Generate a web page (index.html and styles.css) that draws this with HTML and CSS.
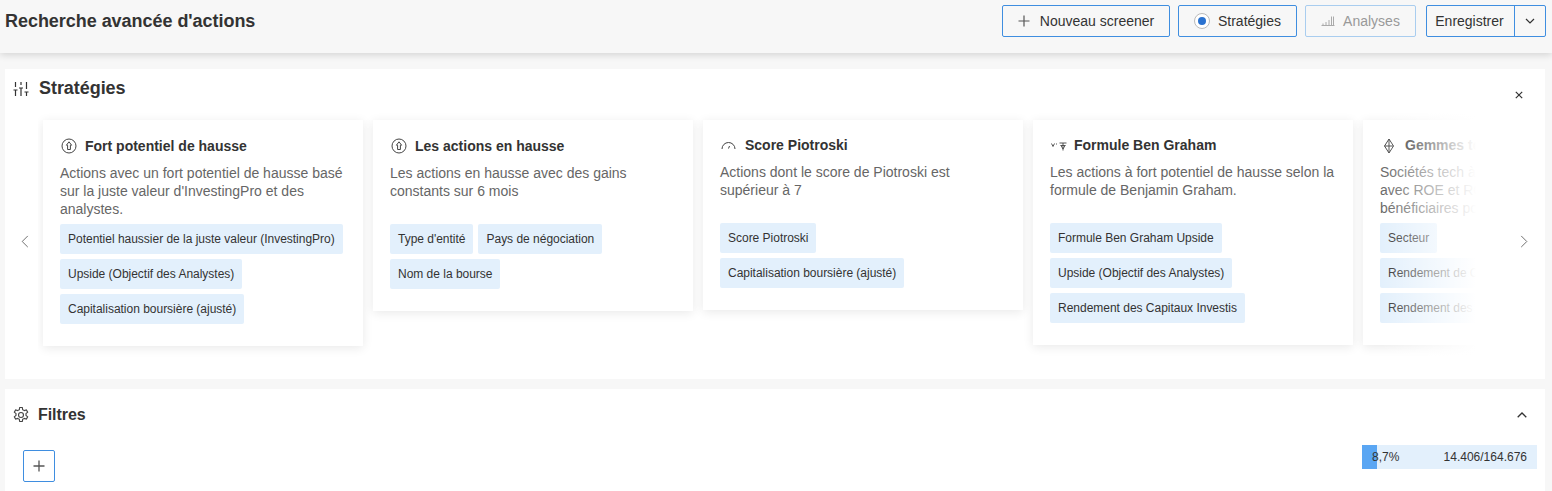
FILE: index.html
```html
<!DOCTYPE html>
<html lang="fr">
<head>
<meta charset="utf-8">
<title>Recherche avancée d'actions</title>
<link rel="stylesheet" href="styles.css">
</head>
<body>
<header class="topbar">
  <h1 class="page-title">Recherche avancée d'actions</h1>
  <div class="actions">
    <button class="btn btn-new"><svg class="ic-plus" viewBox="0 0 12 12"><path d="M6 .5v11M.5 6h11"/></svg>Nouveau screener</button>
    <button class="btn btn-strat"><span class="radio"><span class="radio-dot"></span></span>Stratégies</button>
    <button class="btn btn-analyses"><svg class="ic-bars" viewBox="0 0 14 10"><path d="M.5 9.500h13M2 9V7.500M5 9V6M8 9V4M10.500 9V.5M12.500 9V.5"/></svg>Analyses</button>
    <div class="split">
      <button class="split-main">Enregistrer</button>
      <button class="split-arrow"><svg class="ic-chev" viewBox="0 0 10 6"><path d="M1 1l4 4 4-4"/></svg></button>
    </div>
  </div>
</header>

<main class="content">
  <section class="panel panel-strat">
    <div class="panel-head">
      <svg class="ic-sliders" viewBox="0 0 16 14"><path d="M2.500 0v5M2.500 8v6M.5 8h4M8 0v3M8 6v8M6 6h4M13.500 0v7M13.500 10v4M11.500 10h4"/></svg>
      <h2 class="panel-title">Stratégies</h2>
      <svg class="ic-close" viewBox="0 0 8 8"><path d="M.8.8l6.400 6.400M7.200.8L.8 7.200"/></svg>
    </div>
    <div class="carousel">
      <button class="nav nav-prev"><svg class="ic-nav" viewBox="0 0 8 14"><path d="M7 1L1 7l6 6"/></svg></button>
      <div class="viewport">
        <article class="card">
          <div class="card-head tall"><svg class="ic-card" viewBox="0 0 16 16"><circle cx="8" cy="8" r="7"/><path d="M8 3.800l2.600 3.400H9.400v4.300H6.600V7.200H5.400z"/></svg><h3>Fort potentiel de hausse</h3></div>
          <p class="desc">Actions avec un fort potentiel de hausse basé sur la juste valeur d'InvestingPro et des analystes.</p>
          <div class="tags"><span class="tag">Potentiel haussier de la juste valeur (InvestingPro)</span><span class="tag">Upside (Objectif des Analystes)</span><span class="tag">Capitalisation boursière (ajusté)</span></div>
        </article>
        <article class="card">
          <div class="card-head tall"><svg class="ic-card" viewBox="0 0 16 16"><circle cx="8" cy="8" r="7"/><path d="M8 3.800l2.600 3.400H9.400v4.300H6.600V7.200H5.400z"/></svg><h3>Les actions en hausse</h3></div>
          <p class="desc">Les actions en hausse avec des gains constants sur 6 mois</p>
          <div class="tags"><span class="tag">Type d'entité</span><span class="tag">Pays de négociation</span><span class="tag">Nom de la bourse</span></div>
        </article>
        <article class="card">
          <div class="card-head"><svg class="ic-card" viewBox="0 0 16 16"><path d="M1 11A6.500 6.500 0 0 1 14 11M7.500 10.500l1-2.500"/></svg><h3>Score Piotroski</h3></div>
          <p class="desc">Actions dont le score de Piotroski est supérieur à 7</p>
          <div class="tags tags-stack"><span class="tag">Score Piotroski</span><span class="tag">Capitalisation boursière (ajusté)</span></div>
        </article>
        <article class="card">
          <div class="card-head"><svg class="ic-card ic-graham" viewBox="0 0 16 16"><path d="M.5 5.500l1.500 3 1.500-3M5.500 5.500v1M8.500 5h7M9.500 7.500h5M10 7.500l2 3.500 2-3.500M12 5v7.500"/></svg><h3>Formule Ben Graham</h3></div>
          <p class="desc">Les actions à fort potentiel de hausse selon la formule de Benjamin Graham.</p>
          <div class="tags"><span class="tag">Formule Ben Graham Upside</span><span class="tag">Upside (Objectif des Analystes)</span><span class="tag">Rendement des Capitaux Investis</span></div>
        </article>
        <article class="card">
          <div class="card-head"><svg class="ic-card" viewBox="0 0 16 16"><path d="M8 1l4.500 7L8 15 3.500 8zM3.500 8h9M8 1v14"/></svg><h3>Gemmes tech</h3></div>
          <p class="desc">Sociétés tech à forte croissance<br>avec ROE et ROIC élevés et<br>bénéficiaires positifs.</p>
          <div class="tags tags-stack"><span class="tag">Secteur</span><span class="tag">Rendement de Capitaux Propres</span><span class="tag">Rendement des Capitaux Investis</span></div>
        </article>
        <div class="fade"></div>
      </div>
      <button class="nav nav-next"><svg class="ic-nav" viewBox="0 0 8 14"><path d="M1 1l6 6-6 6"/></svg></button>
    </div>
  </section>

  <section class="panel panel-filters">
    <div class="filters-head">
      <svg class="ic-gear" viewBox="0 0 24 24"><circle cx="12" cy="12" r="3.300"/><path d="M10.300 2h3.400l.6 3a7.500 7.500 0 0 1 2 1.200l2.900-1 1.700 3-2.300 2a7.500 7.500 0 0 1 0 2.300l2.300 2-1.700 3-2.900-1a7.500 7.500 0 0 1-2 1.200l-.6 3h-3.400l-.6-3a7.500 7.500 0 0 1-2-1.200l-2.900 1-1.700-3 2.300-2a7.500 7.500 0 0 1 0-2.300l-2.300-2 1.700-3 2.900 1a7.500 7.500 0 0 1 2-1.200z"/></svg>
      <h2 class="panel-title panel-title-sm">Filtres</h2>
      <svg class="ic-up" viewBox="0 0 10 6"><path d="M.7 5.300L5 1l4.300 4.300"/></svg>
    </div>
    <div class="filters-body">
      <button class="add"><svg class="ic-add" viewBox="0 0 12 12"><path d="M6 .5v11M.5 6h11"/></svg></button>
      <div class="meter">
        <span class="meter-fill"></span>
        <span class="meter-pct">8,7%</span>
        <span class="meter-count">14.406/164.676</span>
      </div>
    </div>
  </section>
</main>
</body>
</html>
```
FILE: styles.css
```css
* { box-sizing: border-box; }
html, body { height: 100%; }
body {
  margin: 0;
  background: #f7f7f7;
  font-family: "Liberation Sans", Arial, sans-serif;
  color: #2a2e39;
  overflow: hidden;
}
button { font-family: inherit; cursor: pointer; }
svg { display: block; fill: none; flex: none; }

.topbar {
  height: 53px;
  padding: 5px 6px 0 5px;
  display: flex;
  justify-content: space-between;
  align-items: flex-start;
  background: #f7f7f7;
  box-shadow: 0 2px 7px rgba(0, 0, 0, .14);
}
.page-title {
  margin: 0;
  font-size: 18px;
  line-height: 32px;
  font-weight: 700;
  letter-spacing: -.04px;
  color: #333;
}
.actions { display: flex; }
.btn {
  height: 32px;
  display: flex;
  align-items: center;
  justify-content: center;
  padding: 0;
  background: transparent;
  border: 1px solid #3f8ee0;
  border-radius: 2px;
  font-size: 14px;
  color: #333;
}
.btn-new { width: 168px; margin-right: 8px; gap: 10px; }
.btn-strat { width: 119px; margin-right: 8px; gap: 8px; }
.btn-analyses { width: 111px; margin-right: 10px; gap: 8px; border-color: #a9cdef; color: #999; }
.ic-plus { width: 12px; height: 12px; stroke: #555; stroke-width: 1.200; }
.radio {
  width: 16px;
  height: 16px;
  border: 1px solid #bbb;
  border-radius: 50%;
  display: flex;
  align-items: center;
  justify-content: center;
  background: #fff;
}
.radio-dot { width: 8px; height: 8px; border-radius: 50%; background: #2a72d0; }
.ic-bars { width: 14px; height: 10px; stroke: #aaa; stroke-width: 1; }
.split {
  display: flex;
  width: 120px;
  height: 32px;
  border: 1px solid #3f8ee0;
  border-radius: 2px;
}
.split-main {
  width: 88px;
  padding: 0 2px 0 0;
  border: 0;
  border-right: 1px solid #3f8ee0;
  background: transparent;
  font-size: 14px;
  color: #333;
}
.split-arrow {
  flex: 1;
  padding: 0;
  border: 0;
  background: transparent;
  display: flex;
  align-items: center;
  justify-content: center;
}
.ic-chev { width: 10px; height: 6px; stroke: #333; stroke-width: 1.200; }

.content { padding: 16px 7px 0 5px; }
.panel { background: #fff; }
.panel-strat { height: 310px; padding-top: 7px; overflow: hidden; }
.panel-filters { margin-top: 10px; height: 110px; }
.panel-head {
  height: 24px;
  padding: 0 22px 0 8px;
  display: flex;
  align-items: center;
}
.ic-sliders { width: 16px; height: 14px; stroke: #333; stroke-width: 1.200; margin: 2px 10px 0 0; }
.panel-title {
  margin: 0;
  font-size: 18px;
  line-height: 22px;
  font-weight: 700;
  letter-spacing: -.05px;
  color: #333;
}
.panel-title-sm { font-size: 16px; }
.ic-close { width: 8px; height: 8px; stroke: #333; stroke-width: 1.200; margin: 14px 0 0 auto; }

.carousel {
  display: flex;
  align-items: flex-start;
  margin-top: 10px;
  padding-right: 9px;
}
.nav {
  flex: none;
  height: 30px;
  margin-top: 116px;
  border: 0;
  background: transparent;
  display: flex;
  align-items: center;
  justify-content: center;
}
.nav-prev { width: 33px; padding: 0 0 0 7px; }
.nav-next { width: 28px; padding: 0 0 0 4px; }
.ic-nav { width: 8px; height: 13px; stroke: #666; stroke-width: 1; }
.viewport {
  position: relative;
  flex: 1;
  min-width: 0;
  display: flex;
  align-items: flex-start;
  gap: 10px;
  overflow: hidden;
  height: 260px;
  padding: 10px 0 0 5px;
}
.card {
  flex: none;
  width: 320px;
  padding: 16px 17px 22px;
  background: #fff;
  box-shadow: 0 2px 10px rgba(0, 0, 0, .09);
}
.card-head { display: flex; align-items: center; height: 19px; padding-left: 1px; }
.card-head.tall { height: 20px; }
.card-head h3 {
  margin: 0;
  font-size: 14px;
  line-height: 19px;
  font-weight: 700;
  color: #333;
  white-space: nowrap;
}
.ic-card { width: 16px; height: 16px; stroke: #444; stroke-width: 1; margin-right: 8px; }
.ic-graham { stroke-width: .9; margin-right: 7px; }
.desc {
  margin: 8px 0 0;
  height: 54px;
  font-size: 14px;
  line-height: 18px;
  color: #666;
}
.tags { display: flex; flex-wrap: wrap; gap: 5px; margin-top: 6px; }
.tags-stack { flex-direction: column; align-items: flex-start; }
.tag {
  height: 30px;
  padding: 0 8px;
  display: flex;
  align-items: center;
  background: #e3f0fc;
  border-radius: 2px;
  font-size: 12px;
  letter-spacing: -.015px;
  color: #333;
  white-space: nowrap;
}
.fade {
  position: absolute;
  top: 0;
  right: 0;
  bottom: 0;
  width: 145px;
  background: linear-gradient(to right, rgba(255, 255, 255, 0) 12%, #fff 78%);
}

.filters-head {
  height: 50px;
  padding: 2px 18px 0 7px;
  display: flex;
  align-items: center;
}
.ic-gear { width: 18px; height: 18px; stroke: #444; stroke-width: 1.500; margin-right: 8px; }
.ic-up { width: 10px; height: 6px; stroke: #333; stroke-width: 1.300; margin-left: auto; }
.filters-body {
  display: flex;
  justify-content: space-between;
  align-items: flex-start;
  padding: 11px 8px 0 18px;
}
.add {
  width: 32px;
  height: 32px;
  padding: 0;
  border: 1px solid #3f8ee0;
  border-radius: 2px;
  background: #fff;
  display: flex;
  align-items: center;
  justify-content: center;
}
.ic-add { width: 12px; height: 12px; stroke: #555; stroke-width: 1.300; }
.meter {
  position: relative;
  width: 175px;
  height: 24px;
  margin-top: -5px;
  padding: 0 10px;
  display: flex;
  justify-content: space-between;
  align-items: center;
  background: #e3f0fc;
  font-size: 12px;
  color: #333;
}
.meter-fill {
  position: absolute;
  left: 0;
  top: 0;
  bottom: 0;
  width: 15px;
  background: #5aa6f3;
}
.meter-pct, .meter-count { position: relative; }
```
